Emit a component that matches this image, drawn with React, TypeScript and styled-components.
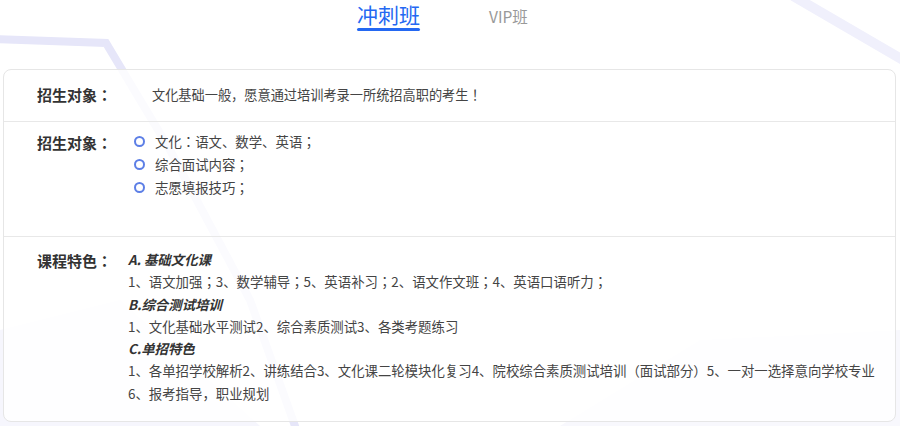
import React from "react";
import styled, { createGlobalStyle } from "styled-components";

const Global = createGlobalStyle`
  html, body { margin: 0; padding: 0; background: #ffffff; }
  body { font-family: "Noto Sans CJK JP", "Noto Sans CJK SC", "Noto Sans", sans-serif; color: #333; }
  * { box-sizing: border-box; }
`;

const Page = styled.div`
  position: relative;
  width: 900px;
  height: 426px;
  overflow: hidden;
  padding: 0 4px 0 3px;
`;

const Deco = styled.svg`
  position: absolute;
  left: 0;
  top: 0;
  width: 900px;
  height: 426px;
  pointer-events: none;
`;

const Tabs = styled.div`
  position: relative;
  display: flex;
  justify-content: center;
  align-items: flex-start;
  gap: 69px;
  height: 69px;
  padding-right: 14px;
`;

const Tab = styled.div<{ $active?: boolean }>`
  display: flex;
  flex-direction: column;
  align-items: center;
  padding-top: ${(p) => (p.$active ? "0px" : "5px")};
  font-size: ${(p) => (p.$active ? "21px" : "15.5px")};
  line-height: ${(p) => (p.$active ? "28px" : "22px")};
  color: ${(p) => (p.$active ? "#2468f2" : "#999999")};
  &::after {
    content: "";
    display: ${(p) => (p.$active ? "block" : "none")};
    width: 100%;
    height: 3px;
    border-radius: 2px;
    background: #2468f2;
  }
`;

const Card = styled.div`
  position: relative;
  border: 1px solid #e6e6e6;
  border-radius: 8px;
  background: rgba(255, 255, 255, 0.82);
  height: 353px;
  display: flex;
  flex-direction: column;
`;

const Row = styled.div<{ $h?: number; $pt: number }>`
  display: flex;
  align-items: flex-start;
  padding-top: ${(p) => p.$pt}px;
  ${(p) => (p.$h ? `height: ${p.$h}px;` : "flex: 1;")}
  & + & { border-top: 1px solid #e8e8e8; }
`;

const Label = styled.div<{ $lh: number }>`
  flex: 0 0 124px;
  padding-left: 33px;
  font-size: 15px;
  font-weight: 700;
  color: #333;
  line-height: ${(p) => p.$lh}px;
  white-space: nowrap;
`;

const Plain = styled.div`
  padding-left: 24px;
  font-size: 13.2px;
  line-height: 22px;
  color: #444;
`;

const List = styled.ul`
  list-style: none;
  margin: 0;
  padding: 0 0 0 6px;
`;

const Item = styled.li`
  display: flex;
  align-items: center;
  gap: 10px;
  font-size: 13.4px;
  line-height: 23px;
  color: #444;
  &::before {
    content: "";
    width: 7px;
    height: 7px;
    border-radius: 50%;
    border: 2px solid #5d7fe6;
    flex: none;
  }
`;

const Features = styled.div`
  display: flex;
  flex-direction: column;
  font-size: 13.4px;
  line-height: 22.3px;
  color: #444;
  white-space: nowrap;
`;

const Heading = styled.div`
  font-style: italic;
  font-weight: 700;
  color: #333;
`;

const Line = styled.div``;

export default function App() {
  return (
    <>
      <Global />
      <Page>
        <Deco viewBox="0 0 900 426">
          <polyline
            points="-10,39 106,43 170,150 250,300 300,440"
            fill="none"
            stroke="#e6e6f9"
            strokeWidth="8"
          />
          <polyline
            points="793,-4 903,60"
            fill="none"
            stroke="#f0f0fc"
            strokeWidth="10"
          />
          <polygon points="0,330 120,300 260,426 0,426" fill="#f6f6fd" />
          <polygon points="560,426 700,340 900,330 900,426" fill="#f8f8fd" />
        </Deco>
        <Tabs>
          <Tab $active>冲刺班</Tab>
          <Tab>VIP班</Tab>
        </Tabs>
        <Card>
          <Row $h={51} $pt={14}>
            <Label $lh={22}>招生对象：</Label>
            <Plain>文化基础一般，愿意通过培训考录一所统招高职的考生！</Plain>
          </Row>
          <Row $h={115} $pt={8}>
            <Label $lh={26}>招生对象：</Label>
            <List>
              <Item>文化：语文、数学、英语；</Item>
              <Item>综合面试内容；</Item>
              <Item>志愿填报技巧；</Item>
            </List>
          </Row>
          <Row $pt={11}>
            <Label $lh={26}>课程特色：</Label>
            <Features>
              <Heading>A. 基础文化课</Heading>
              <Line>1、语文加强；3、数学辅导；5、英语补习；2、语文作文班；4、英语口语听力；</Line>
              <Heading>B.综合测试培训</Heading>
              <Line>1、文化基础水平测试2、综合素质测试3、各类考题练习</Line>
              <Heading>C.单招特色</Heading>
              <Line>1、各单招学校解析2、讲练结合3、文化课二轮模块化复习4、院校综合素质测试培训（面试部分）5、一对一选择意向学校专业</Line>
              <Line>6、报考指导，职业规划</Line>
            </Features>
          </Row>
        </Card>
      </Page>
    </>
  );
}
